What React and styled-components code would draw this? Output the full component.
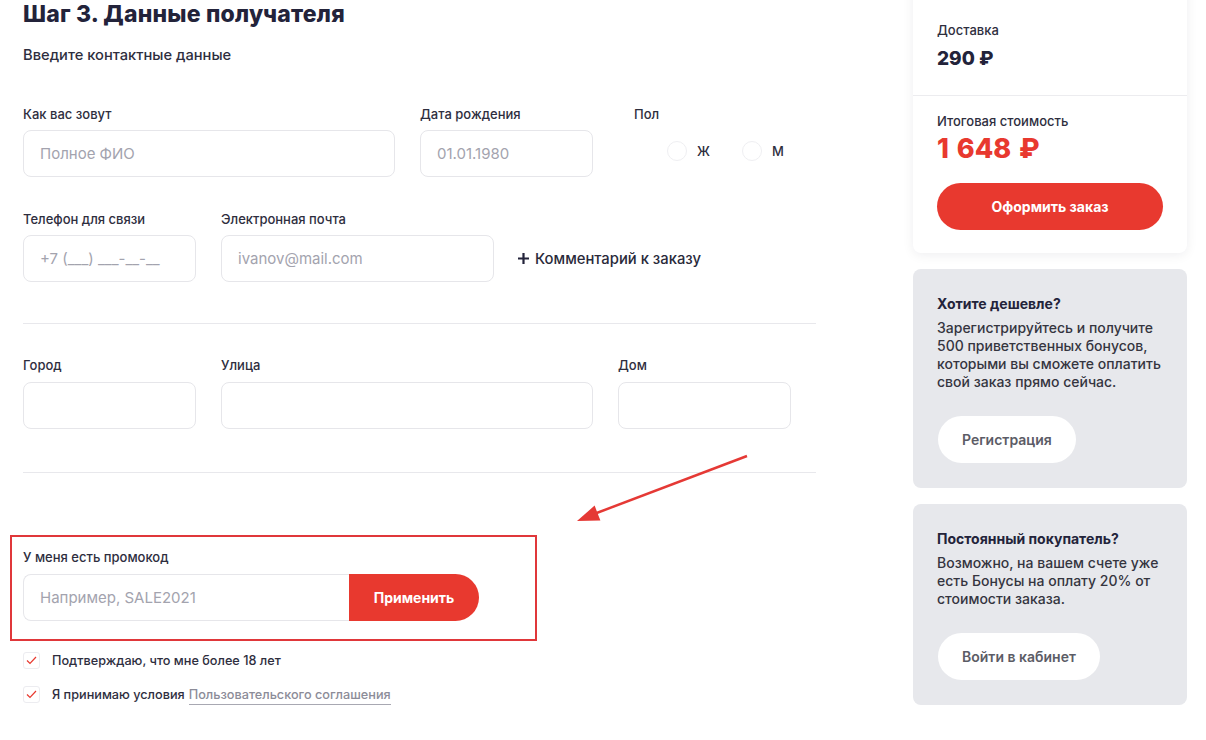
import styled, { createGlobalStyle } from "styled-components";

const GlobalStyle = createGlobalStyle`
  body {
    margin: 0;
    background: #fff;
    font-family: Inter, "Noto Sans", sans-serif;
    color: #2a2a3a;
    overflow: hidden;
  }
`;

const Page = styled.div`
  position: relative;
  display: flex;
  width: 1206px;
  height: 740px;
  overflow: hidden;
`;

const Main = styled.div`
  width: 793px;
  margin-left: 23px;
`;

const Aside = styled.div`
  width: 274px;
  margin-left: 97px;
  display: flex;
  flex-direction: column;
  gap: 16px;
`;

const Title = styled.h1`
  margin: 0;
  font-size: 23px;
  line-height: 28px;
  font-weight: 800;
  color: #23233a;
  letter-spacing: 0.2px;
`;

const Subtitle = styled.p`
  margin: 17px 0 0;
  font-size: 14.7px;
  line-height: 20px;
  font-weight: 500;
  color: #2e2e3e;
`;

const Row = styled.div`
  display: flex;
  gap: 25px;
  margin-top: ${(p) => p.$top}px;
  align-items: flex-start;
`;

const Field = styled.div`
  display: flex;
  flex-direction: column;
  gap: ${(p) => p.$gap || 8}px;
  width: ${(p) => p.$w}px;
`;

const Label = styled.label`
  font-size: 13px;
  line-height: 16px;
  font-weight: 500;
  color: #2e2e3e;
`;

const Input = styled.input`
  box-sizing: border-box;
  width: 100%;
  height: 47px;
  border: 1px solid #e6e6ea;
  border-radius: 8px;
  padding: 0 16px;
  font-family: inherit;
  font-size: 15px;
  color: #2a2a3a;
  outline: none;
  &::placeholder {
    color: #a3a3ae;
  }
`;

const GenderGroup = styled.div`
  display: flex;
  flex-direction: column;
  margin-left: 16px;
`;

const Radios = styled.div`
  display: flex;
  gap: 32px;
  margin-top: 19px;
  margin-left: 33px;
`;

const RadioItem = styled.label`
  display: flex;
  align-items: center;
  gap: 10px;
  font-size: 13px;
  font-weight: 500;
  color: #2e2e3e;
`;

const RadioCircle = styled.span`
  width: 20px;
  height: 20px;
  border-radius: 50%;
  border: 1px solid #efeff2;
  box-sizing: border-box;
`;

const CommentLink = styled.button`
  display: flex;
  align-items: center;
  gap: 5px;
  border: none;
  background: none;
  padding: 0;
  height: 47px;
  margin: 24px 0 0 -2px;
  font-family: inherit;
  font-size: 14.8px;
  font-weight: 500;
  color: #2a2a3a;
  cursor: pointer;
`;

const Divider = styled.hr`
  border: none;
  border-top: 1px solid #e8e8ec;
  margin: ${(p) => p.$top}px 0 0;
`;

const PromoBox = styled.div`
  box-sizing: border-box;
  width: 527px;
  height: 106px;
  margin: 62px 0 0 -13px;
  padding: 9px 0 0 11px;
  border: 2px solid #e0373a;
`;

const PromoRow = styled.div`
  display: flex;
  margin-top: 8px;
`;

const PromoInput = styled(Input)`
  width: 326px;
  border-right: none;
  border-radius: 8px 0 0 8px;
`;

const ApplyButton = styled.button`
  width: 130px;
  height: 47px;
  border: none;
  border-radius: 0 24px 24px 0;
  background: #e8392f;
  color: #fff;
  font-family: inherit;
  font-size: 14px;
  font-weight: 700;
`;

const Checks = styled.div`
  display: flex;
  flex-direction: column;
  gap: 17px;
  margin-top: 11px;
`;

const CheckRow = styled.label`
  display: flex;
  align-items: center;
  gap: 12px;
  font-size: 12.7px;
  font-weight: 500;
  color: #2e2e3e;
`;

const CheckBox = styled.span`
  box-sizing: border-box;
  width: 17px;
  height: 17px;
  border: 1px solid #ececf0;
  border-radius: 3px;
  display: flex;
  align-items: center;
  justify-content: center;
`;

const AgreementLink = styled.a`
  color: #8c8c98;
  text-decoration: none;
  border-bottom: 1px solid #a8a8b2;
  padding-bottom: 2px;
  margin-left: 4px;
`;

const SummaryCard = styled.div`
  background: #fff;
  border-radius: 8px;
  margin-top: -20px;
  box-shadow: 0 2px 12px rgba(20, 20, 40, 0.07);
`;

const SummarySection = styled.div`
  padding: ${(p) => p.$pad};
  border-top: ${(p) => (p.$line ? "1px solid #ececef" : "none")};
`;

const SmallText = styled.div`
  font-size: 13px;
  line-height: 16px;
  font-weight: 500;
  color: #2e2e3e;
`;

const Price = styled.div`
  font-size: ${(p) => p.$size}px;
  font-weight: 800;
  color: ${(p) => p.$color};
  margin-top: ${(p) => p.$top}px;
  line-height: 1.2;
  word-spacing: ${(p) => p.$ws || 0}px;
`;

const OrderButton = styled.button`
  width: 226px;
  height: 47px;
  margin-top: 18px;
  border: none;
  border-radius: 24px;
  background: #e8392f;
  color: #fff;
  font-family: inherit;
  font-size: 14px;
  font-weight: 700;
`;

const PromoCard = styled.div`
  background: #e7e8ec;
  border-radius: 8px;
  padding: 26px 24px 25px;
  height: ${(p) => p.$h}px;
  box-sizing: border-box;
`;

const CardTitle = styled.div`
  font-size: 14px;
  line-height: 18px;
  font-weight: 700;
  color: #23233a;
`;

const CardText = styled.p`
  margin: 6px 0 0;
  font-size: 14px;
  line-height: 18px;
  font-weight: 500;
  color: #35353f;
`;

const GhostButton = styled.button`
  margin-top: 25px;
  margin-left: 1px;
  height: 47px;
  padding: 0 24px;
  border: none;
  border-radius: 24px;
  background: #fff;
  color: #5c5c66;
  font-family: inherit;
  font-size: 14px;
  font-weight: 600;
`;

const Arrow = styled.svg`
  position: absolute;
  left: 570px;
  top: 450px;
`;

function Check() {
  return (
    <svg width="11" height="9" viewBox="0 0 11 9">
      <path d="M1 4.5 L4 7.5 L10 1" fill="none" stroke="#e8392f" strokeWidth="1.2" />
    </svg>
  );
}

function App() {
  return (
    <Page>
      <GlobalStyle />
      <Main>
        <Title>Шаг 3. Данные получателя</Title>
        <Subtitle>Введите контактные данные</Subtitle>

        <Row $top={41}>
          <Field $w={372}>
            <Label>Как вас зовут</Label>
            <Input placeholder="Полное ФИО" />
          </Field>
          <Field $w={173}>
            <Label>Дата рождения</Label>
            <Input placeholder="01.01.1980" />
          </Field>
          <GenderGroup>
            <Label>Пол</Label>
            <Radios>
              <RadioItem>
                <RadioCircle />Ж
              </RadioItem>
              <RadioItem>
                <RadioCircle />М
              </RadioItem>
            </Radios>
          </GenderGroup>
        </Row>

        <Row $top={34}>
          <Field $w={173}>
            <Label>Телефон для связи</Label>
            <Input placeholder="+7 (___) ___-__-__" />
          </Field>
          <Field $w={273}>
            <Label>Электронная почта</Label>
            <Input placeholder="ivanov@mail.com" />
          </Field>
          <CommentLink>
            <svg width="13" height="13" viewBox="0 0 13 13">
              <path d="M6.5 1v11M1 6.5h11" stroke="#23233a" strokeWidth="2.2" />
            </svg>
            Комментарий к заказу
          </CommentLink>
        </Row>

        <Divider $top={41} />

        <Row $top={33}>
          <Field $w={173} $gap={9}>
            <Label>Город</Label>
            <Input />
          </Field>
          <Field $w={372} $gap={9}>
            <Label>Улица</Label>
            <Input />
          </Field>
          <Field $w={173} $gap={9}>
            <Label>Дом</Label>
            <Input />
          </Field>
        </Row>

        <Divider $top={43} />

        <PromoBox>
          <Label>У меня есть промокод</Label>
          <PromoRow>
            <PromoInput placeholder="Например, SALE2021" />
            <ApplyButton>Применить</ApplyButton>
          </PromoRow>
        </PromoBox>

        <Checks>
          <CheckRow>
            <CheckBox>
              <Check />
            </CheckBox>
            Подтверждаю, что мне более 18 лет
          </CheckRow>
          <CheckRow>
            <CheckBox>
              <Check />
            </CheckBox>
            <span>
              Я принимаю условия
              <AgreementLink href="#">Пользовательского соглашения</AgreementLink>
            </span>
          </CheckRow>
        </Checks>
      </Main>

      <Aside>
        <SummaryCard>
          <SummarySection $pad="42px 24px 24px">
            <SmallText>Доставка</SmallText>
            <Price $size={19} $color="#23233a" $top={10}>
              290 ₽
            </Price>
          </SummarySection>
          <SummarySection $line $pad="17px 24px 23px">
            <SmallText>Итоговая стоимость</SmallText>
            <Price $size={27} $color="#e8392f" $top={4} $ws={2}>
              1 648 ₽
            </Price>
            <OrderButton>Оформить заказ</OrderButton>
          </SummarySection>
        </SummaryCard>

        <PromoCard $h={219}>
          <CardTitle>Хотите дешевле?</CardTitle>
          <CardText>
            Зарегистрируйтесь и получите 500 приветственных бонусов, которыми вы
            сможете оплатить свой заказ прямо сейчас.
          </CardText>
          <GhostButton>Регистрация</GhostButton>
        </PromoCard>

        <PromoCard $h={201}>
          <CardTitle>Постоянный покупатель?</CardTitle>
          <CardText>
            Возможно, на вашем счете уже есть Бонусы на оплату 20% от стоимости
            заказа.
          </CardText>
          <GhostButton>Войти в кабинет</GhostButton>
        </PromoCard>
      </Aside>

      <Arrow width="185" height="80" viewBox="0 0 185 80">
        <line x1="177" y1="6" x2="24" y2="64" stroke="#e53935" strokeWidth="2.5" />
        <polygon points="7,71 30.4,70.6 24.6,55.6" fill="#e53935" />
      </Arrow>
    </Page>
  );
}

export default App;
